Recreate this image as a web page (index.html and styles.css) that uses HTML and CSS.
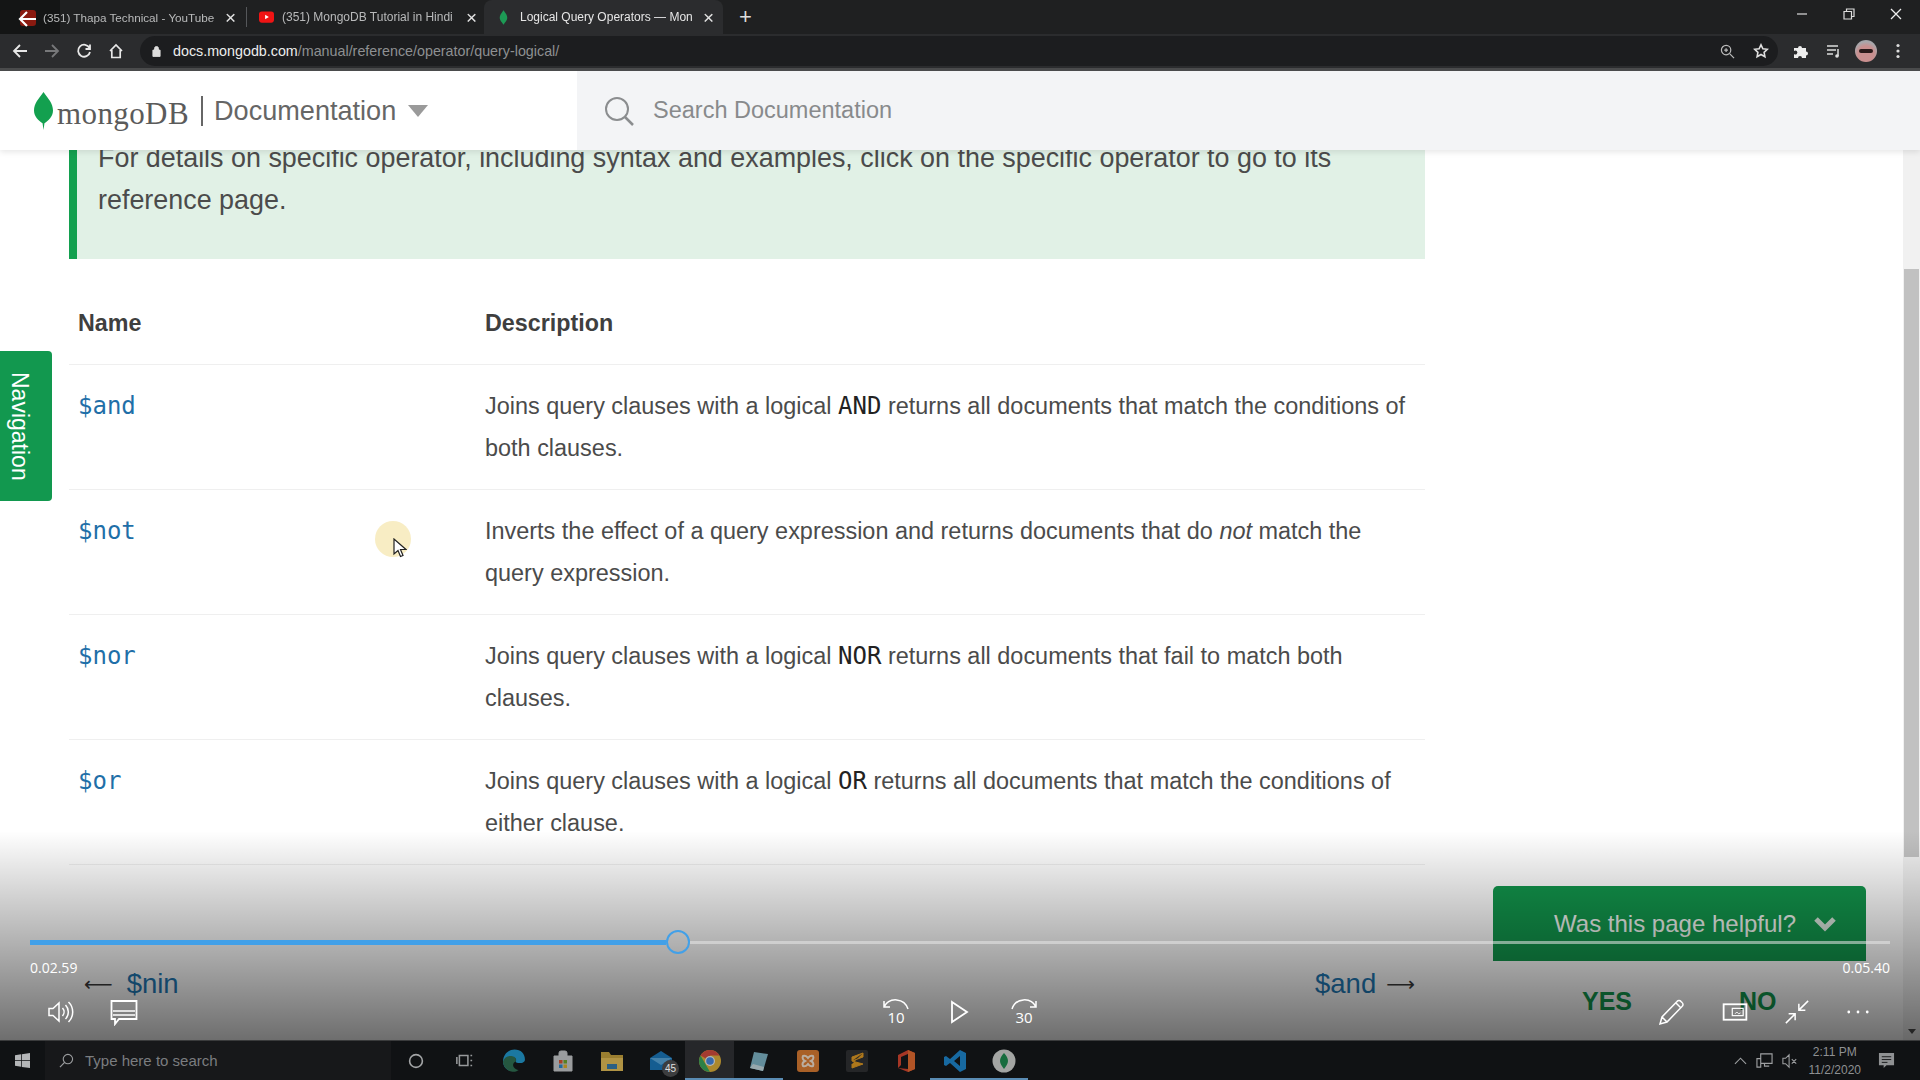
FILE: index.html
```html
<!DOCTYPE html>
<html lang="en">
<head>
<meta charset="utf-8">
<title>Logical Query Operators — MongoDB Manual</title>
<link rel="stylesheet" href="styles.css">
</head>
<body>
<div class="screen">

  <div class="tabstrip">
    <div class="corner-shade">
      <span class="fav-red"></span>
      <svg class="video-back" viewBox="0 0 20 20" width="20" height="20"><path d="M18 10H3M9 3l-7 7 7 7" fill="none" stroke="#fff" stroke-width="2.2"/></svg>
    </div>
    <div class="tab tab-first">
      <span class="tab-title">(351) Thapa Technical - YouTube</span><span class="tab-x">×</span>
    </div>
    <div class="tab-sep"></div>
    <div class="tab tab-second">
      <svg class="fav" viewBox="0 0 16 12" width="15" height="12"><rect width="16" height="12" rx="3" fill="#f01414"/><path d="M6.5 3.5v5l4-2.500z" fill="#fff"/></svg>
      <span class="tab-title">(351) MongoDB Tutorial in Hindi</span><span class="tab-x">×</span>
    </div>
    <div class="tab tab-active">
      <svg class="fav" viewBox="0 0 10 16" width="9" height="15"><path d="M5 0C2 4 .8 6 .8 8.500S3 13 5 16c2-3 4.200-5 4.200-7.500S8 4 5 0z" fill="#1d9a55"/></svg>
      <span class="tab-title">Logical Query Operators — Mon</span><span class="tab-x">×</span>
    </div>
    <span class="tab-plus">+</span>
    <div class="winctl">
      <svg viewBox="0 0 12 12" width="12" height="12"><path d="M1 6h10" stroke="#ddd" stroke-width="1.200"/></svg>
      <svg viewBox="0 0 12 12" width="12" height="12"><path d="M1 3.500h7.500V11H1zM3.500 3.500V1H11v7.500H8.500" fill="none" stroke="#ddd" stroke-width="1.200"/></svg>
      <svg viewBox="0 0 12 12" width="12" height="12"><path d="M1 1l10 10M11 1L1 11" stroke="#eee" stroke-width="1.300"/></svg>
    </div>
  </div>

  <div class="toolbar">
    <div class="nav-icons">
      <svg viewBox="0 0 16 16" width="16" height="16"><path d="M15 8H2M8 2L2 8l6 6" fill="none" stroke="#e8e8e8" stroke-width="1.800"/></svg>
      <svg viewBox="0 0 16 16" width="16" height="16"><path d="M1 8h13M8 2l6 6-6 6" fill="none" stroke="#77787a" stroke-width="1.800"/></svg>
      <svg viewBox="0 0 16 16" width="16" height="16"><path d="M13.500 5A6 6 0 1 0 14 9M14 1.500V6H9.500" fill="none" stroke="#e8e8e8" stroke-width="1.800"/></svg>
      <svg viewBox="0 0 16 16" width="16" height="16"><path d="M2 8l6-6 6 6M3.800 7v7.500h8.400V7" fill="none" stroke="#e8e8e8" stroke-width="1.700"/></svg>
    </div>
    <div class="omnibox">
      <svg class="lock" viewBox="0 0 10 12" width="9" height="12"><path d="M1 5h8v7H1zM2.800 5V3.200a2.200 2.200 0 0 1 4.400 0V5" fill="#ddd" stroke="#ddd"/></svg>
      <span class="url"><b>docs.mongodb.com</b>/manual/reference/operator/query-logical/</span>
      <span class="omni-icons">
        <svg viewBox="0 0 16 16" width="15" height="15"><circle cx="6.500" cy="6.500" r="5" fill="none" stroke="#bbb" stroke-width="1.300"/><path d="M10.500 10.500L15 15M4.500 6.500h4M6.500 4.500v4" stroke="#bbb" stroke-width="1.300"/></svg>
        <svg viewBox="0 0 16 16" width="16" height="16"><path d="M8 1.800l1.900 4 4.400.5-3.200 3 .8 4.400L8 11.500l-3.900 2.200.8-4.400-3.200-3 4.400-.5z" fill="none" stroke="#e0e0e0" stroke-width="1.600"/></svg>
      </span>
    </div>
    <div class="ext-icons">
      <svg viewBox="0 0 16 16" width="16" height="16"><path d="M1 5h4a2 2 0 1 1 4 0h4v3.500a2 2 0 1 1 0 4V15H9a2 2 0 1 0-4 0H1v-4a2 2 0 1 0 0-3z" fill="#eee"/></svg>
      <svg viewBox="0 0 16 16" width="16" height="16"><path d="M1 3h11M1 7h9M1 11h6M12 6v7" stroke="#ddd" stroke-width="1.500" fill="none"/><circle cx="11" cy="13" r="1.800" fill="#ddd"/></svg>
      <span class="avatar"><span class="shades"></span></span>
      <svg viewBox="0 0 4 16" width="4" height="16"><circle cx="2" cy="2.500" r="1.600" fill="#ddd"/><circle cx="2" cy="8" r="1.600" fill="#ddd"/><circle cx="2" cy="13.500" r="1.600" fill="#ddd"/></svg>
    </div>
  </div>

  <div class="page">
    <header class="site-header">
      <div class="brand">
        <svg class="leaf" viewBox="0 0 20 40" width="19" height="40"><path d="M10 0C5 7 0 12 0 19.500 0 26 5 30 9 33l1 7 1-7c4-3 9-7 9-13.500C20 12 15 7 10 0z" fill="#13a04f"/></svg>
        <span class="wordmark">mongoDB</span>
        <span class="brand-rule"></span>
        <span class="brand-doc">Documentation</span>
        <svg class="brand-caret" viewBox="0 0 20 12" width="20" height="12"><path d="M0 0h20L10 12z" fill="#9a9a9a"/></svg>
      </div>
      <div class="search">
        <svg viewBox="0 0 30 30" width="30" height="30"><circle cx="13" cy="13" r="11" fill="none" stroke="#8b8d8f" stroke-width="2"/><path d="M21 21l8 8" stroke="#8b8d8f" stroke-width="2.500"/></svg>
        <span>Search Documentation</span>
      </div>
    </header>

    <main class="doc">
      <div class="note">For details on specific operator, including syntax and examples, click on the specific operator to go to its reference page.</div>
      <table class="ops">
        <thead>
          <tr><th class="col-name">Name</th><th>Description</th></tr>
        </thead>
        <tbody>
          <tr><td class="col-name"><a class="op">$and</a></td><td>Joins query clauses with a logical <code>AND</code> returns all documents that match the conditions of both clauses.</td></tr>
          <tr><td class="col-name"><a class="op">$not</a></td><td>Inverts the effect of a query expression and returns documents that do <em>not</em> match the query expression.</td></tr>
          <tr><td class="col-name"><a class="op">$nor</a></td><td>Joins query clauses with a logical <code>NOR</code> returns all documents that fail to match both clauses.</td></tr>
          <tr><td class="col-name"><a class="op">$or</a></td><td>Joins query clauses with a logical <code>OR</code> returns all documents that match the conditions of either clause.</td></tr>
        </tbody>
      </table>
    </main>

    <div class="nav-tab">Navigation</div>
    <div class="pointer">
      <svg viewBox="0 0 14 20" width="14" height="20"><path d="M1 1v15l4-3.500 2.500 6 2.500-1-2.500-6H13z" fill="#fff" stroke="#222" stroke-width="1.200"/></svg>
    </div>

    <div class="scrollbar">
      <span class="sb-up"></span>
      <span class="sb-thumb"></span>
      <span class="sb-down"></span>
    </div>

    <div class="pager pager-prev"><span class="pager-arrow">⟵</span><span class="pager-link">$nin</span></div>
    <div class="pager pager-next"><span class="pager-link">$and</span><span class="pager-arrow">⟶</span></div>

    <aside class="feedback">
      <div class="feedback-head">Was this page helpful?
        <svg viewBox="0 0 24 16" width="24" height="16"><path d="M3 3l9 9 9-9" fill="none" stroke="#d8e6dc" stroke-width="5"/></svg>
      </div>
      <div class="feedback-body"><span>YES</span><span>NO</span></div>
    </aside>

    <div class="fade"></div>

    <div class="player">
      <div class="seek"><span class="seek-done"></span><span class="seek-knob"></span><span class="seek-rest"></span></div>
      <div class="times"><span>0.02.59</span><span>0.05.40</span></div>
      <div class="controls">
        <div class="ctl-group ctl-left">
          <svg viewBox="0 0 28 28" width="28" height="28"><path d="M3 10.500h4l6-5.500v18l-6-5.500H3z" fill="none" stroke="#fff" stroke-width="1.500"/><path d="M16.500 10a6 6 0 0 1 0 8M19.500 7a10 10 0 0 1 0 14M22.500 4a14 14 0 0 1 0 20" fill="none" stroke="#fff" stroke-width="1.500"/></svg>
          <svg viewBox="0 0 28 28" width="28" height="28"><path d="M1.500 3h25v18H9l-4 5v-5H1.500z" fill="none" stroke="#fff" stroke-width="1.800"/><path d="M3 13h22M3 17h22" stroke="#fff" stroke-width="1.500"/></svg>
        </div>
        <div class="ctl-group ctl-center">
          <span class="skip">
            <svg viewBox="0 0 28 14" width="28" height="14"><path d="M2 8A13 13 0 0 1 26 10M2 2v6h6" fill="none" stroke="#fff" stroke-width="1.500"/></svg>
            <span>10</span>
          </span>
          <svg viewBox="0 0 20 24" width="20" height="24"><path d="M2 2l15 10L2 22z" fill="none" stroke="#fff" stroke-width="1.800"/></svg>
          <span class="skip">
            <svg viewBox="0 0 28 14" width="28" height="14"><path d="M26 8A13 13 0 0 0 2 10M26 2v6h-6" fill="none" stroke="#fff" stroke-width="1.500"/></svg>
            <span>30</span>
          </span>
        </div>
        <div class="ctl-group ctl-right">
          <svg viewBox="0 0 28 28" width="28" height="28"><path d="M2 26l2-7L19 3.500a2.500 2.500 0 0 1 4 0l1 1a2.500 2.500 0 0 1 0 4L9 24zM4 19l5 5M18 5l5 5" fill="none" stroke="#fff" stroke-width="1.500"/></svg>
          <svg viewBox="0 0 28 22" width="26" height="20"><rect x="1.500" y="2.500" width="25" height="17" fill="none" stroke="#fff" stroke-width="2"/><rect x="11" y="7" width="12" height="8" fill="none" stroke="#fff" stroke-width="1.300"/><path d="M14 13l2-2 2 2 2-1" stroke="#fff" fill="none"/></svg>
          <svg viewBox="0 0 28 28" width="26" height="26"><path d="M26 2L16 12M16 5v7h7M2 26l10-10M5 16h7v7" fill="none" stroke="#fff" stroke-width="1.600"/></svg>
          <svg viewBox="0 0 26 6" width="24" height="6"><circle cx="3" cy="3" r="1.500" fill="#fff"/><circle cx="13" cy="3" r="1.500" fill="#fff"/><circle cx="23" cy="3" r="1.500" fill="#fff"/></svg>
        </div>
      </div>
    </div>
  </div>

  <footer class="taskbar">
    <div class="start">
      <svg viewBox="0 0 16 16" width="15" height="15"><path d="M0 2.300l6.500-.9v6.200H0zM7.300 1.300L16 0v7.600H7.300zM0 8.400h6.500v6.200L0 13.700zM7.300 8.400H16V16l-8.700-1.200z" fill="#b4b6b8"/></svg>
    </div>
    <div class="tb-search">
      <svg viewBox="0 0 16 16" width="15" height="15"><circle cx="9.500" cy="6.500" r="5" fill="none" stroke="#9a9c9e" stroke-width="1.200"/><path d="M6 10l-5 5" stroke="#9a9c9e" stroke-width="1.300"/></svg>
      <span>Type here to search</span>
    </div>
    <div class="tb-apps">
      <span class="app"><svg viewBox="0 0 20 20" width="16" height="16"><circle cx="10" cy="10" r="8" fill="none" stroke="#d5d7d8" stroke-width="2"/></svg></span>
      <span class="app"><svg viewBox="0 0 20 20" width="17" height="17"><path d="M4 4h10v12H4zM1 6v8M17 4h2M17 10h2M17 16h2" fill="none" stroke="#c4c6c8" stroke-width="1.800"/></svg></span>
      <span class="app"><svg viewBox="0 0 24 24" width="25" height="25"><path d="M2 13C2 6 7 1.500 13 1.500c6 0 10 4 10 9.500 0 2.500-2.500 3.500-5 3.500-2 0-4-.5-4-1.500 1-1 1-4-3-4-4 0-5 4-4 7 .5 2 3 5 6 6C7 23 2 19 2 13z" fill="#1f9ad0"/><path d="M2 13c1-4 5-6 9-5 3 .5 4 3 3 5-2 1-3 3-2 5 1 2 3 3 5 3-2 1.500-4 2-6 1.800-5-.5-9-5-9-9.800z" fill="#2d6e4f"/></svg></span>
      <span class="app"><svg viewBox="0 0 24 24" width="24" height="24"><path d="M3 7h18v15H3zM8 7V4a2 2 0 0 1 2-2h4a2 2 0 0 1 2 2v3" fill="#c8cacc" stroke="#c8cacc" stroke-width="1"/><rect x="8" y="11" width="3.500" height="3.500" fill="#d94e2b"/><rect x="12.500" y="11" width="3.500" height="3.500" fill="#6fa52a"/><rect x="8" y="15.500" width="3.500" height="3.500" fill="#2a86c9"/><rect x="12.500" y="15.500" width="3.500" height="3.500" fill="#e0ad26"/></svg></span>
      <span class="app"><svg viewBox="0 0 24 24" width="24" height="24"><path d="M1 3h8l2 3h12v16H1z" fill="#c9a23a"/><rect x="1" y="9" width="22" height="13" fill="#e6be55"/><rect x="7" y="15" width="10" height="5" fill="#3479a8"/></svg></span>
      <span class="app app-mail"><svg viewBox="0 0 24 24" width="24" height="24"><path d="M1 9l11-7 11 7v12H1z" fill="#1776bb"/><path d="M1 9l11 7 11-7" fill="#56a7dd"/></svg><span class="badge">45</span></span>
      <span class="app app-on"><svg viewBox="0 0 24 24" width="24" height="24"><circle cx="12" cy="12" r="11" fill="#d9a92e"/><path d="M12 12L2.500 6.500A11 11 0 0 1 21.500 6.500H12z" fill="#cf4233"/><path d="M12 23A11 11 0 0 1 2.500 6.500L8 16z" fill="#2f9e52"/><circle cx="12" cy="12" r="5" fill="#e6e6e6"/><circle cx="12" cy="12" r="3.800" fill="#3c7fd9"/></svg></span>
      <span class="app app-line"><svg viewBox="0 0 24 24" width="24" height="24"><path d="M7 3l14 2-5 17-13-3z" fill="#7fb6c8"/><path d="M3 19l13 3 1-4-11-3z" fill="#c6dbe0"/></svg></span>
      <span class="app"><svg viewBox="0 0 24 24" width="24" height="24"><rect x="1" y="1" width="22" height="22" rx="3" fill="#dd7a2e"/><path d="M7 7c3-1 4 1 5 2 1-1 2-3 5-2 1 2 0 4-2 5 2 1 3 3 2 5-3 1-4-1-5-2-1 1-2 3-5 2-1-2 0-4 2-5-2-1-3-3-2-5z" fill="none" stroke="#f3e2d0" stroke-width="2"/></svg></span>
      <span class="app"><svg viewBox="0 0 24 24" width="24" height="24"><rect x="1" y="1" width="22" height="22" rx="2" fill="#2c2d2f"/><path d="M18 4L7 8v4l11 3-11 4v-4M18 4v4L7 12" fill="#e49a1e" stroke="#e49a1e"/></svg></span>
      <span class="app"><svg viewBox="0 0 24 24" width="24" height="24"><path d="M14 1l7 3v16l-7 3-10-4 10 1V5L7 8v8l-3 3V6z" fill="#d8432b"/><path d="M14 1l7 3v16l-7 3z" fill="#e86a2c"/></svg></span>
      <span class="app app-line"><svg viewBox="0 0 24 24" width="24" height="24"><path d="M17 1l6 3v16l-6 3L7 14l-4 3-2-1V8l2-1 4 3zM17 7l-6 5 6 5z" fill="#1a86d0"/></svg></span>
      <span class="app app-line"><svg viewBox="0 0 24 24" width="24" height="24"><circle cx="12" cy="12" r="11.500" fill="#d4d6d3"/><path d="M12 4c-2.500 3-4 5-4 8s2 5 4 8c2-3 4-5 4-8s-1.500-5-4-8z" fill="#1a8b4c"/></svg></span>
    </div>
    <div class="tray">
      <svg viewBox="0 0 14 8" width="13" height="8"><path d="M1 7l6-6 6 6" fill="none" stroke="#9ea0a2" stroke-width="1.200"/></svg>
      <svg viewBox="0 0 18 18" width="17" height="17"><path d="M5 2h12v10H5zM1 7h4v9H1zM9 12v3h5" fill="none" stroke="#9ea0a2" stroke-width="1.200"/></svg>
      <svg viewBox="0 0 18 18" width="16" height="16"><path d="M1 6h3l4-4v14l-4-4H1zM11 7l5 5M16 7l-5 5" fill="none" stroke="#9ea0a2" stroke-width="1.200"/></svg>
      <div class="clock"><span>2:11 PM</span><span>11/2/2020</span></div>
      <svg viewBox="0 0 18 18" width="17" height="17"><path d="M1 1h16v13H9l-3 3v-3H1z" fill="#8f9193"/><path d="M4 5h10M4 8h10M4 11h6" stroke="#151618" stroke-width="1"/></svg>
    </div>
  </footer>
</div>
</body>
</html>
```

FILE: styles.css
```css
* { box-sizing: border-box; }
html, body { margin: 0; padding: 0; height: 100%; }
body { font-family: "Liberation Sans", Arial, sans-serif; background: #fff; overflow: hidden; }
.screen { width: 1920px; height: 1080px; display: flex; flex-direction: column; overflow: hidden; filter: blur(.5px); }

/* browser tab strip */
.tabstrip { position: relative; height: 34px; flex: none; background: #1f2021; display: flex; align-items: stretch; padding-left: 43px; color: #b9babb; font-size: 12px; }
.corner-shade { position: absolute; left: 0; top: 0; width: 60px; height: 34px; background: #141515; }
.fav-red { position: absolute; left: 20px; top: 10px; width: 16px; height: 16px; background: #8a1a10; border-radius: 3px; }
.video-back { position: absolute; left: 18px; top: 9px; }
.tab { display: flex; align-items: center; position: relative; }
.tab-title { white-space: nowrap; overflow: hidden; }
.tab-x { font-size: 19px; color: #e2e2e2; line-height: 1; }
.tab-first { width: 193px; }
.tab-first .tab-title { width: 172px; font-size: 11.700px; }
.tab-first .tab-x { margin-left: 10px; }
.tab-sep { width: 1px; height: 20px; background: #55575a; margin: 7px 0 0 10px; }
.tab-second { width: 236px; padding-left: 12px; }
.tab-second .fav { margin-right: 8px; }
.tab-second .tab-title { width: 174px; }
.tab-second .tab-x { margin-left: 10px; }
.tab-active { width: 239px; margin-left: 1px; padding-left: 15px; background: #2b2c2e; border-radius: 8px 8px 0 0; color: #e6e6e6; }
.tab-active .fav { margin-right: 12px; }
.tab-active .tab-title { width: 175px; }
.tab-active .tab-x { margin-left: 8px; }
.tab-plus { font-size: 22px; color: #ddd; margin-left: 16px; align-self: center; line-height: 1; }
.winctl { margin-left: auto; display: flex; align-items: center; gap: 35px; padding: 0 18px 6px 0; }

/* browser toolbar */
.toolbar { height: 37px; flex: none; background: #2b2c2e; display: flex; align-items: center; border-bottom: 3px solid #4a4b4c; }
.nav-icons { width: 140px; display: flex; gap: 16px; padding-left: 12px; align-items: center; }
.omnibox { width: 1638px; height: 30px; background: #1c1d1f; border-radius: 15px; display: flex; align-items: center; padding-left: 12px; }
.lock { margin-right: 12px; }
.url { color: #8e9092; font-size: 14.300px; white-space: nowrap; }
.url b { color: #eceded; font-weight: normal; }
.omni-icons { margin-left: auto; display: flex; gap: 18px; align-items: center; padding-right: 9px; }
.ext-icons { flex: 1; display: flex; align-items: center; gap: 17px; padding-left: 15px; }
.avatar { width: 22px; height: 22px; margin: 0 2px 0 -4px; border-radius: 50%; background: radial-gradient(circle at 50% 65%, #c98f8f 0 45%, #a8a8ac 70%, #8e8e92 100%); position: relative; display: block; }
.shades { position: absolute; left: 4px; top: 9px; width: 14px; height: 4px; background: #2a1a1a; border-radius: 2px; }

/* page */
.page { position: relative; flex: 1; min-height: 0; overflow: hidden; background: #fff; }
.site-header { position: relative; z-index: 2; height: 79px; background: #fff; display: flex; box-shadow: 0 2px 6px rgba(0,0,0,.1); }
.brand { width: 577px; display: flex; align-items: center; padding-left: 34px; position: relative; }
.leaf { margin-right: 4px; }
.wordmark { font-family: "Liberation Serif", serif; font-size: 31px; color: #5b5b5b; margin-top: 6px; width: 144px; letter-spacing: .4px; }
.brand-rule { width: 2px; height: 30px; background: #666; margin-right: 11px; }
.brand-doc { font-size: 27.100px; color: #666; margin-right: 12px; }
.search { flex: 1; background: #f3f4f6; display: flex; align-items: center; padding-left: 27px; gap: 19px; font-size: 23.500px; color: #888a8c; padding-right: 0; }

.doc { width: 1425px; padding-left: 69px; margin-top: -13px; color: #4b4b4b; font-size: 23.450px; line-height: 42px; }
.note { background: #e1f1e6; border-left: 8px solid #13a04f; padding: 0 60px 27px 21px; height: 122px; font-size: 26.900px; }
.ops { width: 100%; margin-top: 23px; border-collapse: collapse; table-layout: fixed; }
.ops th, .ops td { padding: 20px 10px 20px 0; text-align: left; vertical-align: top; border-bottom: 1px solid #efefef; }
.ops th { font-weight: 700; color: #3f3f3f; font-size: 23.300px; }
.col-name { width: 416px; padding-left: 9px !important; }
.op { font-family: "DejaVu Sans Mono", monospace; font-size: 24px; color: #1f6fa8; line-height: 1; }
code { font-family: "DejaVu Sans Mono", monospace; font-size: 24px; color: #222; line-height: 1; }
em { font-style: italic; }

.nav-tab { position: absolute; left: 0; top: 280px; width: 52px; height: 150px; background: #12984f; color: #fff; border-radius: 0 4px 4px 0; writing-mode: vertical-rl; font-size: 23px; display: flex; align-items: center; justify-content: center; padding-right: 14px; }
.pointer { position: absolute; left: 375px; top: 450px; width: 36px; height: 36px; border-radius: 50%; background: #f8edc4; padding: 17px 0 0 18px; }

.scrollbar { position: absolute; right: 0; top: 0; bottom: 0; width: 17px; background: #f1f1f1; }
.sb-up { position: absolute; left: 5px; top: 6px; border: 4px solid transparent; border-bottom: 5px solid #505050; border-top: 0; }
.sb-thumb { position: absolute; left: 1px; right: 1px; top: 198px; height: 588px; background: #c1c1c1; }
.sb-down { position: absolute; left: 5px; bottom: 6px; border: 4px solid transparent; border-top: 5px solid #505050; border-bottom: 0; }

.pager { position: absolute; top: 895px; display: flex; align-items: center; gap: 14px; font-size: 27.500px; height: 36px; }
.pager-prev { left: 84px; }
.pager-next { left: 1315px; gap: 10px; }
.pager-link { color: #1f78b4; }
.pager-arrow { color: #3a3a3a; font-family: "DejaVu Sans", sans-serif; font-size: 20px; }

.feedback { position: absolute; left: 1493px; top: 815px; width: 373px; height: 154px; }
.feedback-head { height: 75px; background: #12964c; border-radius: 5px 5px 0 0; color: #f0f5f1; font-size: 24px; display: flex; align-items: center; justify-content: flex-end; gap: 17px; padding: 0 29px 0 0; }
.feedback-body { height: 79px; background: #fff; display: flex; gap: 107px; padding: 26px 0 0 89px; font-size: 25px; font-weight: 700; color: #12964c; }

.fade { position: absolute; inset: 0; background: linear-gradient(to bottom, rgba(0,0,0,0) 760px, rgba(0,0,0,.57) 969px); pointer-events: none; z-index: 3; }

.player { position: absolute; left: 30px; right: 30px; bottom: 0; height: 110px; z-index: 4; color: #fff; }
.seek { height: 24px; display: flex; align-items: center; }
.seek-done { width: 636px; height: 5px; background: #42a0e8; }
.seek-knob { width: 24px; height: 24px; border: 2.500px solid #42a0e8; border-radius: 50%; }
.seek-rest { flex: 1; height: 3px; background: rgba(232,232,232,.55); }
.times { display: flex; justify-content: space-between; font-family: "Open Sans", sans-serif; font-size: 14px; line-height: 20px; margin-top: 4px; }
.controls { position: relative; display: flex; justify-content: space-between; align-items: center; height: 40px; margin-top: 14px; }
.ctl-group { display: flex; align-items: center; }
.ctl-left { gap: 36px; padding-left: 16px; }
.ctl-center { position: absolute; left: 852px; width: 156px; justify-content: space-between; }
.ctl-right { gap: 36px; padding-right: 20px; }
.skip { display: flex; flex-direction: column; align-items: center; font-family: "Open Sans", sans-serif; font-size: 15px; line-height: 15px; width: 28px; }
.skip span { margin-top: -3px; }

/* taskbar */
.taskbar { height: 40px; flex: none; background: #101214; display: flex; align-items: stretch; color: #9a9c9e; border-top: 1px solid #3a3b3c; }
.start { width: 45px; display: flex; align-items: center; justify-content: center; }
.tb-search { width: 346px; background: #17181a; display: flex; align-items: center; gap: 11px; padding-left: 14px; font-size: 15px; color: #7b7d80; }
.tb-apps { display: flex; align-items: stretch; }
.app { position: relative; width: 49px; display: flex; align-items: center; justify-content: center; }
.app svg { opacity: .75; }
.app-on { background: #26272a; box-shadow: inset 0 -2px 0 #5a8cb4; }
.app-line { box-shadow: inset 0 -2px 0 #5a8cb4; }
.badge { position: absolute; right: 6px; bottom: 3px; width: 17px; height: 17px; border-radius: 50%; background: #3c3d3f; color: #e0e0e0; font-size: 10px; line-height: 17px; text-align: center; }
.tray { margin-left: auto; display: flex; align-items: center; gap: 9px; padding-right: 25px; }
.clock { display: flex; flex-direction: column; align-items: center; font-size: 12px; line-height: 18px; margin: 0 8px 0 2px; color: #8e9092; }
```
